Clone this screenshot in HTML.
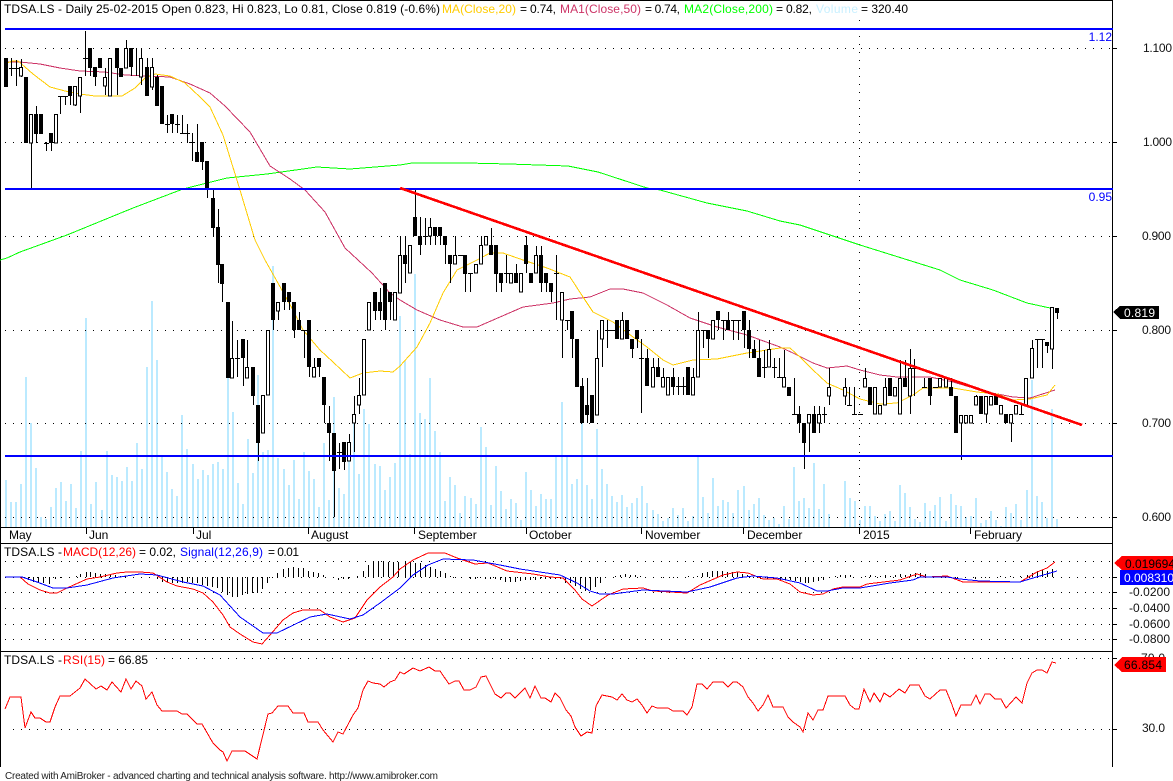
<!DOCTYPE html>
<html lang="en"><head><meta charset="utf-8"><title>TDSA.LS chart</title>
<style>
html,body{margin:0;padding:0;background:#fff;width:1173px;height:781px;overflow:hidden}
svg{display:block}
text{font-family:"Liberation Sans",Arial,sans-serif;font-size:12px;fill:#000;shape-rendering:auto}
.a{font-size:12px;fill:#111}
</style></head><body>
<svg width="1173" height="781" viewBox="0 0 1173 781" xmlns="http://www.w3.org/2000/svg" shape-rendering="crispEdges">
<rect width="1173" height="781" fill="#fff"/>

<!-- volume -->
<path fill="none" stroke="#bbeaff" stroke-width="2" d="M6 527V480M11 527V502M16 527V502M21 527V484M26 527V377M31 527V423M36 527V468M41 527V517M46 527V519M51 527V507M56 527V488M61 527V482M66 527V501M71 527V484M76 527V508M81 527V451M86 527V318M91 527V504M96 527V482M102 527V510M107 527V451M112 527V475M117 527V477M122 527V481M127 527V467M132 527V481M137 527V443M142 527V469M147 527V367M152 527V301M157 527V360M162 527V456M167 527V472M172 527V489M177 527V496M182 527V415M187 527V449M193 527V464M198 527V479M203 527V470M208 527V475M213 527V464M218 527V462M223 527V469M228 527V377M233 527V412M238 527V483M243 527V504M248 527V439M253 527V473M258 527V375M263 527V452M268 527V450M273 527V266M278 527V458M284 527V469M289 527V485M294 527V460M299 527V499M304 527V452M309 527V471M314 527V479M319 527V507M324 527V443M329 527V500M334 527V397M339 527V488M344 527V494M349 527V460M354 527V423M359 527V474M364 527V409M369 527V424M375 527V464M380 527V466M385 527V490M390 527V477M395 527V463M400 527V316M405 527V361M410 527V454M415 527V274M420 527V413M425 527V419M430 527V378M435 527V431M440 527V452M445 527V501M450 527V477M455 527V485M460 527V513M465 527V496M471 527V498M476 527V504M481 527V427M486 527V447M491 527V505M496 527V466M501 527V491M506 527V509M511 527V499M516 527V503M521 527V520M526 527V472M531 527V490M536 527V506M541 527V494M546 527V499M551 527V499M556 527V455M562 527V402M567 527V455M572 527V484M577 527V479M582 527V423M587 527V485M592 527V499M597 527V429M602 527V469M607 527V484M612 527V496M617 527V502M622 527V495M627 527V507M632 527V503M637 527V498M642 527V486M647 527V503M653 527V510M658 527V514M663 527V521M668 527V518M673 527V508M678 527V515M683 527V508M688 527V521M693 527V516M698 527V457M703 527V497M708 527V513M713 527V478M718 527V506M723 527V500M728 527V502M733 527V513M738 527V490M744 527V486M749 527V510M754 527V504M759 527V498M764 527V515M769 527V520M774 527V518M779 527V524M784 527V506M789 527V519M794 527V467M799 527V501M804 527V498M809 527V508M814 527V463M819 527V509M824 527V484M829 527V514M845 527V481M850 527V498M855 527V501M860 527V520M865 527V506M870 527V506M875 527V516M880 527V521M885 527V514M890 527V511M895 527V521M900 527V485M905 527V493M910 527V507M915 527V519M920 527V522M925 527V503M930 527V511M935 527V505M940 527V497M946 527V521M951 527V494M956 527V505M961 527V506M966 527V517M971 527V516M976 527V498M981 527V523M986 527V520M991 527V511M996 527V520M1001 527V526M1006 527V507M1011 527V513M1016 527V504M1021 527V520M1027 527V490M1032 527V380M1037 527V496M1042 527V502M1047 527V518M1052 527V409M1057 527V519"/>

<!-- frame -->
<path fill="none" stroke="#000" stroke-width="1" d="M0 .5H1113M.5 0V767M1112.5 0V767M0 527.5H1113M0 543.5H1113M0 651.5H1113M86.5 527V534M193.5 527V534M308.5 527V534M414.5 527V534M526.5 527V534M641.5 527V534M743.5 527V534M859.5 527V534M970.5 527V534M1113 48.5h4M1113 142.5h4M1113 236.5h4M1113 330.5h4M1113 423.5h4M1113 517.5h4M1113 577.5h4M1113 592.5h4M1113 608.5h4M1113 624.5h4M1113 639.5h4M1113 658.5h4M1113 729.5h4"/>

<!-- grid -->
<path fill="none" stroke="#000" stroke-width="1" stroke-dasharray="1 7" d="M5 48.5H1113M5 142.5H1113M5 236.5H1113M5 330.5H1113M5 423.5H1113M5 517.5H1113M5 561.5H1113M5 577.5H1113M5 592.5H1113M5 608.5H1113M5 624.5H1113M5 639.5H1113M156 658.5H1113M13 729.5H1113M859.5 20V527"/>

<!-- moving averages -->
<polyline fill="none" stroke="#00ff00" stroke-width="1" points="0,260 7,258 20,252 67,235 133,208 183,189 207,183 227,178 267,174 317,167 350,169 400,165 412,163 467,163 509,164 568,166 598,172 647,188 660,190 707,203 747,211 780,221 800,225 860,245 940,270 960,280 993,290 1027,303 1050,308"/>
<polyline fill="none" stroke="#cc3366" stroke-width="1" points="5,62 20,62 40,64 60,68 80,71 105,72 125,75 170,77 190,84 210,93 225,106 250,132 270,166 290,179 305,190 325,212 345,248 358,260 372,273 390,293 400,300 417,310 440,320 463,327 477,327 500,317 523,307 553,303 570,299 590,297 610,289 623,289 643,293 667,305 690,318 717,327 747,335 780,347 793,353 813,363 827,368 847,366 860,370 880,375 897,377 930,377 953,382 987,392 1013,397 1030,398 1055,390"/>
<polyline fill="none" stroke="#ffcc00" stroke-width="1" points="5,64 12,61 18,61 25,67 33,74 50,87 65,91 80,94 95,96 110,96 122,96 135,88 145,78 155,74 170,76 185,83 200,97 210,107 223,135 240,190 255,240 265,260 283,292 293,310 303,330 320,350 333,362 350,378 363,373 380,371 393,372 400,366 417,347 430,323 443,293 457,270 477,260 490,253 503,253 523,260 547,268 570,277 583,297 593,312 613,322 633,337 647,347 663,360 673,365 693,360 717,359 747,353 780,348 790,348 800,357 813,370 827,383 843,390 860,399 880,404 897,403 913,395 923,388 953,388 977,392 997,394 1013,400 1030,399 1047,395 1055,385"/>

<!-- candle wicks -->
<path fill="none" stroke="#000" stroke-width="1" d="M11.5 58V76M9 68.5h5M16.5 60V86M14 68.5h5M21.5 59V77M31.5 114V189M36.5 106V143M46.5 142V151M44 143.5h5M51.5 133V151M60.5 96V114M58 96.5h5M65.5 96V105M63 96.5h5M70.5 86V105M75.5 86V106M80.5 77V113M85.5 31V76M83 58.5h5M90.5 48V76M95.5 67V86M105.5 68V95M117.5 48V95M126.5 40V68M131.5 48V76M136.5 48V76M141.5 48V85M147.5 58V95M152.5 58V90M157.5 75V94M167.5 115V133M165 124.5h5M172.5 114V133M177.5 115V133M175 124.5h5M182.5 115V133M180 133.5h5M187.5 124V143M185 133.5h5M192.5 133V161M190 142.5h5M197.5 124V161M202.5 142V170M207.5 161V198M213.5 189V237M218.5 209V283M222.5 264V302M232.5 321V378M237.5 340V377M235 358.5h5M243.5 339V386M247.5 340V378M253.5 367V405M258.5 405V461M273.5 283V330M278.5 302V320M284.5 283V310M289.5 292V310M294.5 302V338M299.5 312V330M304.5 330V358M302 330.5h5M309.5 320V377M314.5 358V377M319.5 358V377M324.5 377V423M329.5 406V461M334.5 433V517M339.5 443V469M337 452.5h5M344.5 442V470M349.5 434V461M354.5 396V452M359.5 378V414M375.5 292V320M380.5 288V320M385.5 283V330M390.5 292V320M400.5 236V290M405.5 236V283M415.5 189V236M420.5 217V255M425.5 218V245M423 236.5h5M430.5 218V245M435.5 227V245M440.5 227V245M445.5 236V264M450.5 255V283M455.5 236V264M458 255.5h5M465.5 255V292M470.5 273V292M468 273.5h5M481.5 236V264M491.5 228V255M496.5 245V292M501.5 273V292M506.5 255V283M504 273.5h5M516.5 264V283M526.5 236V273M536.5 246V273M541.5 246V292M546.5 273V292M551.5 283V302M556.5 255V320M554 273.5h5M562.5 292V358M567.5 320V330M565 320.5h5M572.5 311V358M582.5 378V423M587.5 378V423M597.5 330V415M602.5 320V367M607.5 320V348M605 330.5h5M610 330.5h5M622.5 312V339M632.5 339V358M637.5 330V348M641.5 339V413M639 358.5h5M647.5 349V386M653.5 358V387M658.5 358V377M663.5 368V387M673.5 368V395M678.5 377V395M676 386.5h5M683.5 377V395M681 386.5h5M693.5 368V395M698.5 312V377M703.5 330V348M701 330.5h5M708.5 330V358M713.5 320V339M718.5 311V330M723.5 320V340M721 320.5h5M728.5 312V330M733.5 320V340M731 320.5h5M738.5 320V340M736 320.5h5M744.5 311V348M749.5 320V358M754.5 340V358M759.5 340V377M764.5 350V378M762 367.5h5M769.5 340V367M774.5 358V378M772 367.5h5M779.5 358V377M777 377.5h5M784.5 350V387M794.5 378V414M792 414.5h5M799.5 406V433M804.5 423V469M809.5 414V452M814.5 406V433M819.5 406V433M824.5 407V423M822 414.5h5M829.5 368V405M845.5 378V405M849.5 387V405M847 405.5h5M854.5 387V414M852 414.5h5M858 414.5h5M865.5 368V387M885.5 378V405M900.5 360V414M905.5 360V387M910.5 349V414M914.5 359V396M912 368.5h5M917 368.5h5M924.5 378V387M922 387.5h5M930.5 378V405M933 387.5h5M951.5 378V396M961.5 415V460M976.5 395V405M986.5 396V423M1011.5 414V442M1021.5 405V414M1019 414.5h5M1032.5 340V378M1037.5 339V368M1035 339.5h5M1042.5 339V368M1040 339.5h5M1047.5 342V353M1052.5 307V369M1057.5 308V319"/>

<!-- black bodies -->
<path fill="none" stroke="#000" stroke-width="4" d="M6 58V87M26 77V143M36 114V134M41 114V134M51 133V143M70 86V96M90 48V68M95 67V77M100 58V68M117 48V68M121 68V77M131 48V67M147 67V96M157 77V106M162 86V124M172 114V124M197 152V162M202 142V162M207 161V189M213 198V228M218 227V265M222 264V284M228 302V378M243 339V358M253 367V396M258 405V443M273 283V320M284 283V302M289 292V302M294 302V330M299 320V330M309 320V367M319 358V367M324 377V405M329 423V433M334 433V471M344 442V462M375 292V311M380 302V311M385 283V320M390 292V302M405 255V264M415 217V236M420 236V245M435 227V236M440 227V236M445 236V245M450 255V264M465 255V274M491 245V255M496 245V274M501 273V283M516 273V283M526 245V264M531 273V283M541 255V283M546 273V283M551 283V292M572 311V339M577 339V387M582 386V423M587 405V415M592 395V423M617 320V339M627 320V339M632 339V349M637 330V339M647 358V386M658 367V377M673 377V387M688 367V395M708 330V339M718 311V320M728 320V330M744 311V330M749 330V349M754 349V358M759 358V377M789 387V396M799 414V423M804 423V443M814 414V433M870 387V405M890 378V396M905 378V387M930 378V396M951 387V396M956 396V433M981 396V414M996 396V405M1006 414V423M1047 342V346M1057 308V313"/>

<!-- white bodies -->
<path fill="#fff" stroke="#000" stroke-width="1" d="M19.5 67.5h3V76h-3zM29.5 114.5h3V143h-3zM54.5 114.5h3V143h-3zM73.5 86.5h3V105h-3zM78.5 77.5h3V96h-3zM103.5 77.5h3V86h-3zM108.5 58.5h3V96h-3zM124.5 48.5h3V68h-3zM139.5 58.5h3V77h-3zM150.5 67.5h3V87h-3zM230.5 358.5h3V378h-3zM245.5 367.5h3V378h-3zM261.5 395.5h3V433h-3zM266.5 330.5h3V395h-3zM276.5 302.5h3V311h-3zM312.5 367.5h3V377h-3zM347.5 442.5h3V461h-3zM352.5 414.5h3V423h-3zM357.5 395.5h3V405h-3zM362.5 339.5h3V395h-3zM367.5 302.5h3V330h-3zM393.5 292.5h3V320h-3zM398.5 255.5h3V293h-3zM408.5 245.5h3V273h-3zM428.5 227.5h3V236h-3zM453.5 255.5h3V264h-3zM474.5 264.5h3V273h-3zM479.5 245.5h3V264h-3zM484.5 236.5h3V245h-3zM509.5 273.5h3V283h-3zM519.5 273.5h3V292h-3zM534.5 255.5h3V273h-3zM560.5 292.5h3V320h-3zM595.5 358.5h3V415h-3zM600.5 320.5h3V339h-3zM620.5 320.5h3V339h-3zM651.5 367.5h3V387h-3zM661.5 377.5h3V387h-3zM666.5 377.5h3V395h-3zM691.5 377.5h3V395h-3zM696.5 330.5h3V377h-3zM711.5 320.5h3V339h-3zM767.5 349.5h3V367h-3zM782.5 377.5h3V387h-3zM807.5 414.5h3V423h-3zM817.5 414.5h3V423h-3zM827.5 387.5h3V396h-3zM843.5 387.5h3V396h-3zM863.5 378.5h3V387h-3zM873.5 387.5h3V414h-3zM878.5 405.5h3V414h-3zM883.5 387.5h3V405h-3zM893.5 387.5h3V396h-3zM898.5 378.5h3V414h-3zM908.5 368.5h3V396h-3zM938.5 378.5h3V387h-3zM944.5 378.5h3V387h-3zM959.5 415.5h3V423h-3zM964.5 415.5h3V423h-3zM969.5 415.5h3V423h-3zM974.5 396.5h3V405h-3zM984.5 396.5h3V414h-3zM989.5 396.5h3V405h-3zM999.5 405.5h3V414h-3zM1009.5 414.5h3V423h-3zM1014.5 405.5h3V414h-3zM1024.5 378.5h3V405h-3zM1030.5 348.5h3V378h-3zM1050.5 307.5h3V349h-3z"/>

<!-- horizontal + trend lines -->
<path fill="none" stroke="#0000ff" stroke-width="2" d="M5 29H1113M5 189H1113M5 456H1113"/>
<line x1="400" y1="188" x2="1082" y2="425" stroke="#ff0000" stroke-width="2.6"/>

<!-- MACD histogram -->
<path fill="none" stroke="#000" stroke-width="1" d="M24.5 577V578M28.5 577V580M33.5 577V582M38.5 577V583M43.5 577V583M49.5 577V584M55.5 577V579M60.5 577V578M76.5 577V576M80.5 577V574M86.5 577V572M90.5 577V572M95.5 577V573M100.5 577V574M105.5 577V574M110.5 577V575M115.5 577V575M120.5 577V576M125.5 577V576M157.5 577V579M162.5 577V582M167.5 577V582M172.5 577V583M177.5 577V583M182.5 577V583M187.5 577V582M192.5 577V583M197.5 577V583M202.5 577V585M207.5 577V586M212.5 577V587M217.5 577V588M222.5 577V592M227.5 577V595M232.5 577V597M237.5 577V597M242.5 577V595M247.5 577V594M252.5 577V593M257.5 577V593M262.5 577V589M267.5 577V583M272.5 577V578M277.5 577V573M283.5 577V569M288.5 577V568M293.5 577V567M298.5 577V568M303.5 577V568M308.5 577V571M313.5 577V572M318.5 577V573M323.5 577V575M333.5 577V578M338.5 578V580M343.5 577V579M348.5 577V579M357.5 577V576M363.5 577V571M368.5 577V565M373.5 577V562M378.5 577V561M383.5 577V561M388.5 577V562M393.5 577V562M398.5 577V562M405.5 577V561M410.5 577V562M415.5 577V563M420.5 577V563M425.5 577V565M430.5 577V567M435.5 577V569M440.5 577V571M445.5 577V573M450.5 577V576M455.5 577V578M470.5 577V579M475.5 577V579M480.5 577V578M485.5 577V579M490.5 577V579M495.5 577V579M500.5 577V580M505.5 577V582M510.5 577V582M515.5 577V582M520.5 577V581M525.5 577V580M530.5 577V580M535.5 577V580M540.5 577V579M545.5 577V579M550.5 577V579M555.5 577V579M560.5 577V579M565.5 577V583M570.5 577V583M575.5 577V586M580.5 577V589M585.5 577V591M590.5 577V590M595.5 577V587M600.5 577V583M605.5 577V578M615.5 577V576M620.5 577V575M625.5 577V574M630.5 577V575M635.5 577V575M640.5 577V576M645.5 577V577M653.5 577V578M663.5 577V578M673.5 577V578M683.5 577V577M688.5 577V576M697.5 577V576M702.5 577V573M707.5 577V572M712.5 577V571M717.5 577V571M722.5 577V571M727.5 577V572M732.5 577V572M737.5 577V572M742.5 577V574M747.5 577V575M753.5 577V578M760.5 577V579M767.5 577V579M773.5 577V579M780.5 577V580M785.5 577V580M790.5 577V580M795.5 577V581M800.5 577V582M805.5 577V583M808.5 577V583M813.5 577V582M818.5 577V581M823.5 577V580M835.5 577V576M840.5 577V575M845.5 577V575M850.5 577V575M855.5 577V577M865.5 577V576M870.5 577V575M875.5 577V576M880.5 577V576M885.5 577V575M890.5 577V576M895.5 577V575M900.5 577V574M905.5 577V575M910.5 577V574M915.5 577V573M920.5 577V573M925.5 577V574M945.5 577V578M955.5 577V578M965.5 577V578M975.5 577V579M985.5 577V578M1000.5 577V576M1010.5 577V576M1020.5 577V576M1027.5 577V575M1032.5 577V573M1037.5 577V571M1042.5 577V570M1047.5 577V571M1052.5 577V569"/>

<!-- MACD lines -->
<polyline fill="none" stroke="#ff0000" stroke-width="1" points="5,577 20,577 28,584 40,590 50,593 57,593 67,588 87,579 100,577 117,573 127,572 140,572 153,573 167,582 177,586 193,589 203,593 213,602 223,615 230,627 240,634 253,642 262,644 270,635 283,620 293,613 303,610 320,610 330,617 343,622 355,618 367,600 380,587 393,577 400,569 413,560 428,553 445,553 457,558 475,564 488,563 507,571 533,574 550,577 563,578 575,590 582,599 592,606 608,595 623,589 643,588 653,591 687,593 700,585 723,575 737,572 748,573 763,579 777,579 790,584 800,592 813,595 823,594 833,589 843,587 860,587 867,584 900,580 917,574 927,577 947,576 963,582 1020,582 1037,572 1047,568 1055,562"/>
<polyline fill="none" stroke="#0000ff" stroke-width="1" points="5,577 22,577 37,582 53,588 67,588 87,585 113,578 140,574 157,575 183,582 203,586 220,595 240,617 263,633 277,633 310,617 327,614 350,619 363,615 380,603 400,588 413,575 428,565 443,559 473,560 500,565 520,569 560,575 577,583 590,591 600,594 613,594 643,590 687,592 710,587 737,578 753,576 777,578 800,583 817,591 827,591 843,588 860,588 890,583 913,580 920,577 947,577 960,579 980,581 1020,582 1033,578 1057,571"/>

<!-- RSI -->
<polyline fill="none" stroke="#ff0000" stroke-width="1" points="5,709 10,697 21,697 25,728 31,712 35,718 40,718 46,722 50,722 55,707 60,696 70,696 80,688 85,679 96,689 101,686 107,690 112,682 121,692 126,679 131,689 136,681 142,686 146,699 152,692 157,705 162,711 177,711 182,714 187,714 197,724 202,724 213,743 220,750 223,752 227,761 232,751 245,751 257,759 268,714 272,713 278,706 288,706 293,713 304,713 308,722 318,722 323,730 333,742 338,732 343,734 353,715 358,708 363,690 368,681 373,683 380,684 384,687 390,682 395,680 400,672 404,674 413,668 420,671 429,667 435,671 440,671 449,684 455,681 459,681 464,690 470,690 476,687 481,677 486,676 495,694 501,698 506,693 510,693 515,698 525,688 530,698 535,686 541,698 545,698 551,702 555,693 560,698 566,710 571,716 575,727 581,736 587,732 592,733 596,706 602,695 612,697 617,700 622,694 627,700 632,702 637,699 642,705 647,713 652,706 657,708 668,708 673,711 683,711 687,715 692,707 697,684 702,684 707,689 713,682 723,682 728,687 733,682 737,682 743,687 748,697 753,703 758,711 763,705 768,695 773,707 783,707 788,717 793,722 800,727 803,732 808,713 813,720 818,710 823,710 828,696 845,696 850,705 855,709 859,709 864,689 870,702 874,693 880,702 884,693 890,697 899,689 905,693 910,685 919,685 925,696 930,699 940,690 946,690 951,702 956,716 961,705 971,705 976,695 980,704 985,694 990,694 995,699 1001,699 1006,708 1016,697 1022,703 1027,683 1032,673 1037,670 1042,670 1047,673 1052,662 1056,663"/>

<!-- header text -->
<text x="4" y="13" textLength="436" lengthAdjust="spacing">TDSA.LS - Daily 25-02-2015 Open 0.823, Hi 0.823, Lo 0.81, Close 0.819 (-0.6%)</text>
<text x="442" y="13" textLength="74" style="fill:#ffcc00">MA(Close,20)</text>
<text x="520" y="13" textLength="36">= 0.74,</text>
<text x="560" y="13" textLength="81" style="fill:#cc3366">MA1(Close,50)</text>
<text x="645" y="13" textLength="35">= 0.74,</text>
<text x="684" y="13" textLength="89" style="fill:#00ff00">MA2(Close,200)</text>
<text x="776" y="13" textLength="36">= 0.82,</text>
<text x="816" y="13" textLength="42" style="fill:#c8f0ff">Volume</text>
<text x="861" y="13" textLength="47">= 320.40</text>

<!-- line labels -->
<text x="1112" y="41" text-anchor="end" style="fill:#0000ff">1.12</text>
<text x="1112" y="201" text-anchor="end" style="fill:#0000ff">0.95</text>

<!-- price axis -->
<text class="a" x="1172" y="52" text-anchor="end" textLength="29">1.100</text>
<text class="a" x="1172" y="146" text-anchor="end" textLength="29">1.000</text>
<text class="a" x="1171" y="240" text-anchor="end" textLength="29">0.900</text>
<text class="a" x="1171" y="334" text-anchor="end" textLength="29">0.800</text>
<text class="a" x="1171" y="427" text-anchor="end" textLength="29">0.700</text>
<text class="a" x="1171" y="521" text-anchor="end" textLength="29">0.600</text>
<polygon points="1113,312 1120,306 1159,306 1159,319 1120,319" fill="#000"/>
<text x="1124" y="317" textLength="31" style="fill:#fff">0.819</text>

<!-- date axis -->
<text x="9" y="539">May</text>
<text x="89" y="539">Jun</text>
<text x="196" y="539">Jul</text>
<text x="311" y="539">August</text>
<text x="418" y="539">September</text>
<text x="529" y="539">October</text>
<text x="645" y="539">November</text>
<text x="747" y="539">December</text>
<text x="863" y="539">2015</text>
<text x="974" y="539">February</text>

<!-- MACD header + axis -->
<text x="4" y="556" textLength="58">TDSA.LS -</text>
<text x="63" y="556" textLength="73" style="fill:#ff0000">MACD(12,26)</text>
<text x="139" y="556" textLength="37">= 0.02,</text>
<text x="180" y="556" textLength="83" style="fill:#0000ff">Signal(12,26,9)</text>
<text x="268" y="556" textLength="31">= 0.01</text>
<text class="a" x="1129" y="596" textLength="41">-0.0200</text>
<text class="a" x="1129" y="612" textLength="41">-0.0400</text>
<text class="a" x="1129" y="628" textLength="41">-0.0600</text>
<text class="a" x="1129" y="643" textLength="41">-0.0800</text>
<polygon points="1114,563 1122,556 1173,556 1173,570 1122,570" fill="#ff0000"/>
<text x="1125" y="568" textLength="50">0.019694</text>
<rect x="1120" y="570" width="53" height="15" fill="#0000ff"/>
<text x="1124" y="582" textLength="50" style="fill:#fff">0.008310</text>

<!-- RSI header + axis -->
<text x="4" y="664" textLength="58">TDSA.LS -</text>
<text x="63" y="664" textLength="42" style="fill:#ff0000">RSI(15)</text>
<text x="108" y="664" textLength="40">= 66.85</text>
<text class="a" x="1141" y="662" textLength="24">70.0</text>
<polygon points="1114,665 1122,657 1166,657 1166,672 1122,672" fill="#ff0000"/>
<text x="1124" y="669" textLength="38">66.854</text>
<text class="a" x="1142" y="732" textLength="23">30.0</text>

<!-- footer -->
<text x="5" y="779" textLength="433" style="font-size:10px;fill:#222">Created with AmiBroker - advanced charting and technical analysis software. http://www.amibroker.com</text>
</svg>
</body></html>
